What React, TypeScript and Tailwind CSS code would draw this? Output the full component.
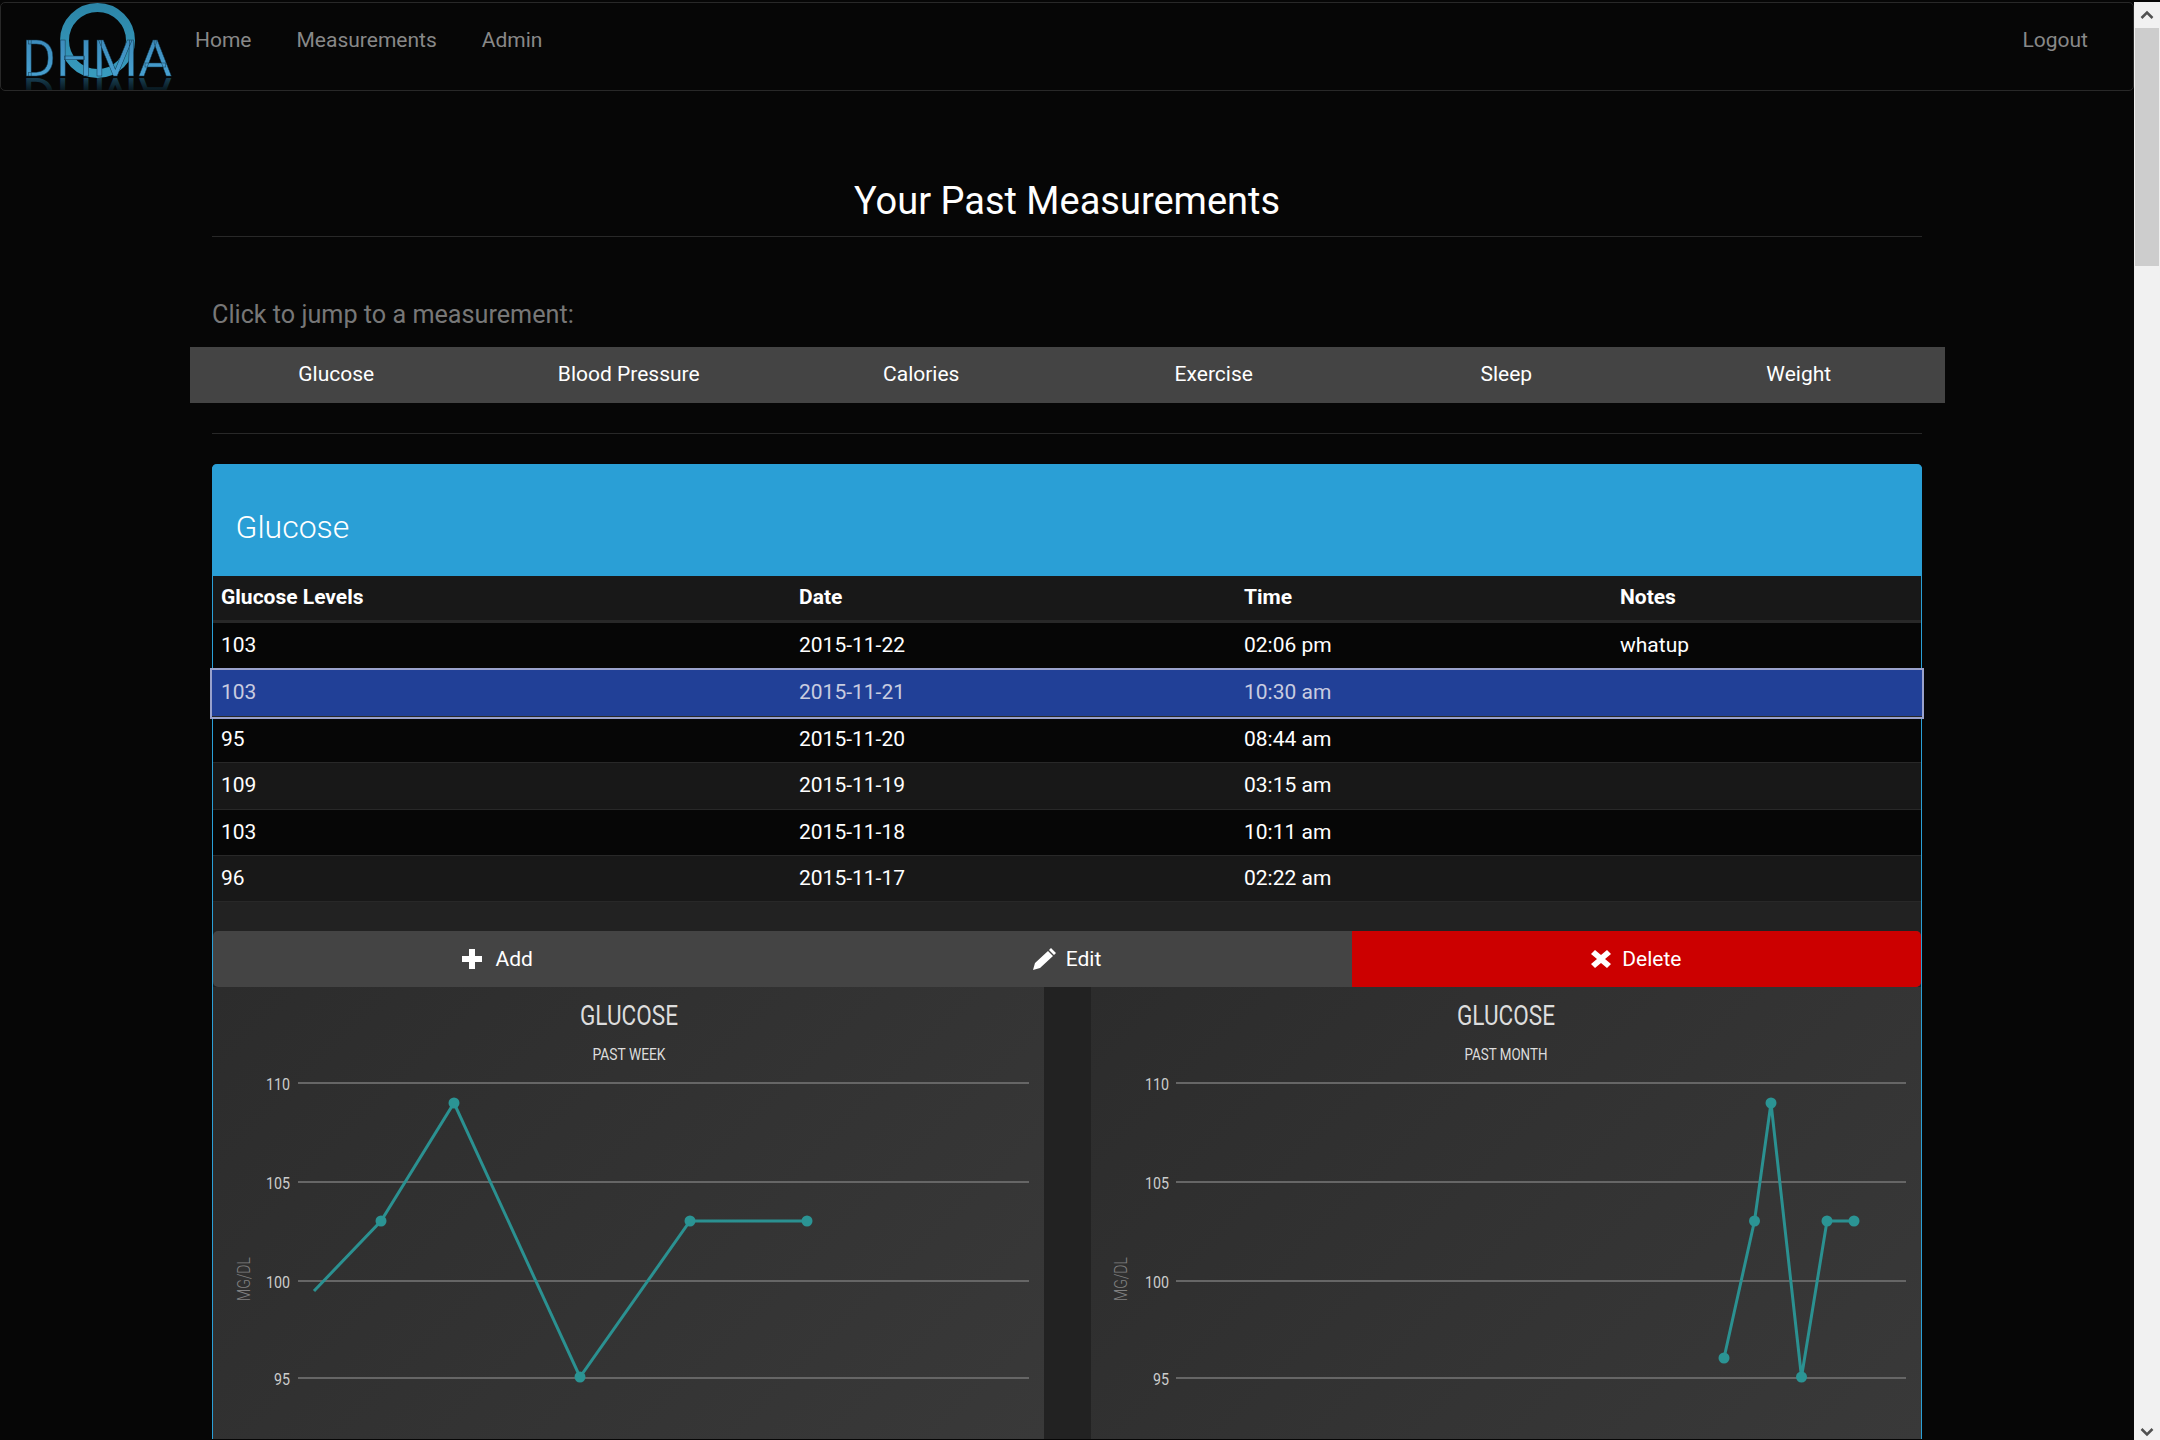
const rows = [
  { level: "103", date: "2015-11-22", time: "02:06 pm", notes: "whatup", bg: "bg-[#060606]", height: "h-[47.4px]" },
  { level: "103", date: "2015-11-21", time: "10:30 am", notes: "", selected: true, bg: "bg-[#214097]", height: "h-[46.4px]" },
  { level: "95", date: "2015-11-20", time: "08:44 am", notes: "", bg: "bg-[#060606]", height: "h-[46.4px]" },
  { level: "109", date: "2015-11-19", time: "03:15 am", notes: "", bg: "bg-[#181818]", height: "h-[46.4px]" },
  { level: "103", date: "2015-11-18", time: "10:11 am", notes: "", bg: "bg-[#060606]", height: "h-[46.4px]" },
  { level: "96", date: "2015-11-17", time: "02:22 am", notes: "", bg: "bg-[#181818]", height: "h-[46.4px]" },
];

const jumps = ["Glucose", "Blood Pressure", "Calories", "Exercise", "Sleep", "Weight"];

const gridLines = [
  { label: "110", y: 1084 },
  { label: "105", y: 1183 },
  { label: "100", y: 1282 },
  { label: "95", y: 1379 },
];

function Logo() {
  return (
    <svg width="190" height="87" viewBox="1 3 190 87" className="shrink-0">
      <defs>
        <linearGradient id="ring" x1="0" y1="0" x2="0" y2="1">
          <stop offset="0" stopColor="#2c86a8" />
          <stop offset="1" stopColor="#379abd" />
        </linearGradient>
        <linearGradient id="letters" x1="0" y1="0" x2="0" y2="1">
          <stop offset="0" stopColor="#3a86b6" />
          <stop offset="1" stopColor="#4ba6d6" />
        </linearGradient>
        <linearGradient id="mirror" x1="0" y1="0" x2="0" y2="1">
          <stop offset="0.55" stopColor="#06141a" />
          <stop offset="1" stopColor="#2f7ea6" />
        </linearGradient>
      </defs>
      <circle cx="97.5" cy="40.5" r="33" fill="none" stroke="url(#ring)" strokeWidth="9" />
      <text x="22" y="76" fontFamily="Roboto" fontWeight="400" fontSize="50" fill="url(#letters)" stroke="#123a50" strokeWidth="0.5" textLength="150" lengthAdjust="spacingAndGlyphs">
        DHMA
      </text>
      <g transform="translate(0 154) scale(1 -1)" opacity="0.8">
        <text x="22" y="76" fontFamily="Roboto" fontWeight="400" fontSize="50" fill="url(#mirror)" textLength="150" lengthAdjust="spacingAndGlyphs">
          DHMA
        </text>
      </g>
    </svg>
  );
}

function Chart({
  subtitle,
  left,
  width,
  gridStart,
  labelEnd,
  unitX,
  titleX,
  subWidth,
  titleWidth,
  points,
  lineWidth,
}: {
  subtitle: string;
  left: number;
  width: number;
  gridStart: number;
  labelEnd: number;
  unitX: number;
  titleX: number;
  subWidth: number;
  titleWidth: number;
  points: number[][];
  lineWidth: number;
}) {
  return (
    <div className="h-[452px] bg-[linear-gradient(135deg,#2c2c2c,#393939)]" style={{ width }}>
      <svg width={width} height="452" viewBox={`${left} 988 ${width} 452`} fontFamily="Roboto">
        <text x={titleX} y="1026" textAnchor="middle" fontSize="28" fontWeight="400" fill="#dddddd" textLength={titleWidth} lengthAdjust="spacingAndGlyphs">
          GLUCOSE
        </text>
        <text x={titleX} y="1061" textAnchor="middle" fontSize="17" fontWeight="400" fill="#dddddd" textLength={subWidth} lengthAdjust="spacingAndGlyphs">
          {subtitle}
        </text>
        {gridLines.map((g) => (
          <g key={g.label}>
            <line x1={gridStart} x2={left + width - 15} y1={g.y} y2={g.y} stroke="#666666" strokeWidth="2" />
            <text
              x={labelEnd}
              y={g.y + 7}
              textAnchor="end"
              fontSize="16"
              fontWeight="400"
              fill="#cccccc"
              textLength={g.label.length * 8}
              lengthAdjust="spacingAndGlyphs"
            >
              {g.label}
            </text>
          </g>
        ))}
        <text
          transform={`translate(${unitX} 1280) rotate(-90)`}
          textAnchor="middle"
          fontSize="18"
          fontWeight="300"
          fill="#808080"
          textLength="44"
          lengthAdjust="spacingAndGlyphs"
        >
          MG/DL
        </text>
        <polyline points={points.map((p) => p.join(",")).join(" ")} fill="none" stroke="#2b9191" strokeWidth={lineWidth} />
        {points
          .filter((p) => p[0] !== 314)
          .map((p) => (
            <circle key={p.join("-")} cx={p[0]} cy={p[1]} r="5.5" fill="#2b9494" />
          ))}
      </svg>
    </div>
  );
}

export default function App() {
  return (
    <div className="flex h-[1440px] w-[2160px] overflow-hidden bg-[#060606] font-['Roboto',sans-serif] text-white">
      <main className="w-[2134px] shrink-0">
        <nav className="mt-[2px] flex h-[89px] items-start rounded-[5px] border border-[#282828] bg-[#060606] text-[21px] text-[#888888]">
          <Logo />
          <a className="mt-[22px] ml-[4px]">Home</a>
          <a className="mt-[22px] ml-[45px]">Measurements</a>
          <a className="mt-[22px] ml-[45px]">Admin</a>
          <a className="mt-[22px] mr-[45px] ml-auto">Logout</a>
        </nav>

        <div className="mx-auto w-[1710px]">
          <h1 className="mt-[88px] text-center text-[38px] leading-[44px] text-white">Your Past Measurements</h1>
          <div className="mt-[13px] border-t border-[#282828]" />
          <p className="mt-[61px] text-[25.2px] leading-[34px] text-[#777777]">Click to jump to a measurement:</p>

          <div className="mt-[15px] -mr-[23px] -ml-[22px] grid h-[56px] grid-cols-6 items-center bg-[#444444] text-center text-[21px]">
            {jumps.map((j) => (
              <span key={j}>{j}</span>
            ))}
          </div>
          <div className="mt-[30px] border-t border-[#282828]" />

          <section className="mt-[30px] rounded-t-[5px] border-x border-[#2a9fd6] bg-[#222222]">
            <div className="-mx-px flex h-[112px] items-center rounded-t-[5px] bg-[#2a9fd6] px-[23.5px] pt-[14px] text-[32px] font-light">Glucose</div>

            <div className="text-[21px]">
              <div className="grid h-[47px] grid-cols-[578px_445px_376px_1fr] items-center border-b-[3px] border-[#282828] bg-[#181818] px-[8px] font-bold">
                <span>Glucose Levels</span>
                <span>Date</span>
                <span>Time</span>
                <span>Notes</span>
              </div>
              {rows.map((r) => (
                <div
                  key={r.date}
                  className={`grid grid-cols-[578px_445px_376px_1fr] items-center border-b border-[#282828] px-[8px] ${r.height} ${r.bg} ${
                    r.selected ? "relative -mx-px shadow-[0_0_0_2px_#9aa2cc] px-[9px] text-[#c8cce0]" : ""
                  }`}
                >
                  <span>{r.level}</span>
                  <span>{r.date}</span>
                  <span>{r.time}</span>
                  <span>{r.notes}</span>
                </div>
              ))}
            </div>

            <div className="mt-[29px] grid h-[56px] grid-cols-3 items-center rounded-[5px] bg-[#444444] text-[21px]">
              <button className="flex items-center justify-center gap-[13px]">
                <svg width="20" height="20" viewBox="0 0 20 20" fill="white">
                  <path d="M7 0h6v7h7v6h-7v7H7v-7H0V7h7z" />
                </svg>
                Add
              </button>
              <button className="flex items-center justify-center gap-[10px]">
                <svg width="23" height="22" viewBox="0 0 23 22" fill="white">
                  <path d="M18 0l5 5-2 2-5-5zM15 3l5 5L7 20l-7 2 2-7z" />
                </svg>
                Edit
              </button>
              <button className="flex h-full items-center justify-center gap-[11px] rounded-r-[5px] bg-[#cc0000]">
                <svg width="20" height="18" viewBox="0 0 20 18" fill="white">
                  <path d="M4 0l6 5 6-5 4 4-6 5 6 5-4 4-6-5-6 5-4-4 6-5-6-5z" />
                </svg>
                Delete
              </button>
            </div>

            <div className="flex justify-between">
              <Chart
                subtitle="PAST WEEK"
                left={213}
                width={831}
                gridStart={298}
                labelEnd={290}
                unitX={250}
                titleX={629}
                titleWidth={98}
                subWidth={73}
                lineWidth={3}
                points={[
                  [314, 1292],
                  [381, 1222],
                  [454, 1104],
                  [580, 1378],
                  [690, 1222],
                  [807, 1222],
                ]}
              />
              <Chart
                subtitle="PAST MONTH"
                left={1091}
                width={830}
                gridStart={1176}
                labelEnd={1169}
                unitX={1127}
                titleX={1506}
                titleWidth={98}
                subWidth={83}
                lineWidth={3}
                points={[
                  [1724, 1359],
                  [1754.5, 1222],
                  [1771, 1104],
                  [1801.5, 1378],
                  [1827, 1222],
                  [1854, 1222],
                ]}
              />
            </div>
          </section>
        </div>
      </main>

      <aside className="mt-[2px] flex w-[26px] flex-col items-center bg-[#f1f1f1] text-[#505050]">
        <div className="flex h-[26px] w-full items-center justify-center">
          <svg width="14" height="10" viewBox="0 0 14 10" fill="none" stroke="#505050" strokeWidth="2.5">
            <path d="M1.5 8L7 2.5 12.5 8" />
          </svg>
        </div>
        <div className="mr-px h-[238px] w-[24px] bg-[#cdcdcd]" />
        <div className="flex flex-1 items-end pb-[3px]">
          <svg width="14" height="10" viewBox="0 0 14 10" fill="none" stroke="#505050" strokeWidth="2.5">
            <path d="M1.5 2L7 7.5 12.5 2" />
          </svg>
        </div>
      </aside>
    </div>
  );
}
